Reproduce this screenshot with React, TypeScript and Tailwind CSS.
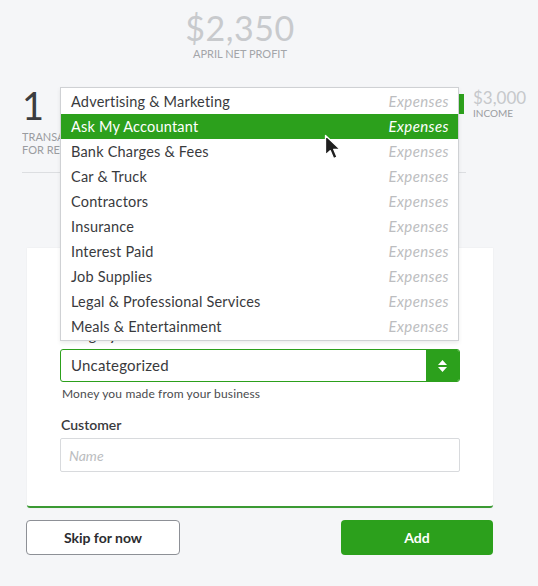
import React from 'react';

const FONT = { fontFamily: 'Lato, "Open Sans", sans-serif' };

const accounts = [
  'Advertising & Marketing',
  'Ask My Accountant',
  'Bank Charges & Fees',
  'Car & Truck',
  'Contractors',
  'Insurance',
  'Interest Paid',
  'Job Supplies',
  'Legal & Professional Services',
  'Meals & Entertainment',
];

function Cursor() {
  return (
    <svg width="20" height="27" viewBox="0 0 20 27" className="absolute left-[324px] top-[134px]">
      <path
        d="M1.5 1.5 L1.5 21 L6.2 16.6 L9.6 24.6 L13 23.1 L9.7 15.3 L16 15.3 Z"
        fill="#1f1f1f"
        stroke="#ffffff"
        strokeWidth="1.3"
        strokeLinejoin="round"
      />
    </svg>
  );
}

function AccountMenu() {
  return (
    <div className="absolute left-[60px] top-[87px] w-[399px] bg-white border border-[#cfd1d4] py-[1px] shadow-[0_2px_4px_rgba(0,0,0,0.08)]">
      {accounts.map((name, i) => {
        const active = i === 1;
        return (
          <div
            key={name}
            className={
              active
                ? 'h-[25px] flex items-center justify-between pl-[10px] pr-[9px] bg-[#2ca01c] text-white'
                : 'h-[25px] flex items-center justify-between pl-[10px] pr-[9px] text-[#393a3d]'
            }
          >
            <span className="text-[14.5px] tracking-[0.2px]">{name}</span>
            <span className={active ? 'text-[15px] italic text-white tracking-[0.4px]' : 'text-[15px] italic text-[#bcbdc0] tracking-[0.4px]'}>
              Expenses
            </span>
          </div>
        );
      })}
    </div>
  );
}

export default function App() {
  return (
    <div className="relative w-[538px] h-[586px] overflow-hidden bg-[#f5f6f8]" style={FONT}>
      {/* net profit */}
      <div className="w-[480px] pt-[11px] text-center">
        <div className="text-[34px] leading-[34px] text-[#c8cacd] tracking-[0.5px]">$2,350</div>
        <div className="mt-[2px] text-[11px] leading-[13px] text-[#a3a5a9]">APRIL NET PROFIT</div>
      </div>

      {/* stats row */}
      <div className="mt-[26px] flex pl-[22px]">
        <div className="w-[437px]">
          <div className="text-[38px] leading-[38px] text-[#3c3d40]">1</div>
          <div className="mt-[6px] w-[38px] overflow-hidden whitespace-nowrap text-[11px] leading-[13px] text-[#9a9ca0]">
            <div>TRANSACTION</div>
            <div>FOR REVIEW</div>
          </div>
        </div>
        <div className="flex items-start gap-[9px]">
          <div className="mt-[8px] w-[5px] h-[20px] bg-[#2ca01c]" />
          <div>
            <div className="mt-[3px] text-[17px] leading-[18px] text-[#c6c8cb]">$3,000</div>
            <div className="text-[10px] leading-[12px] text-[#9a9ca0]">INCOME</div>
          </div>
        </div>
      </div>

      <div className="mt-[16px] ml-[22px] w-[444px] border-t border-[#dcdee1]" />

      {/* form card */}
      <div className="mt-[75px] ml-[27px] w-[466px] bg-white rounded-b-[3px] border-b-2 border-[#3b9a33] shadow-[0_0_2px_rgba(0,0,0,0.07)] px-[33px] pt-[79px] pb-[34px]">
        <div className="text-[14px] leading-[18px] font-semibold text-[#393a3d]">Category</div>
        <div className="mt-[4px] flex h-[33px] rounded-[3px] border border-[#2ca01c] overflow-hidden">
          <div className="flex-1 flex items-center pl-[10px] text-[15px] text-[#393a3d] tracking-[0.2px]">Uncategorized</div>
          <div className="w-[33px] bg-[#2ca01c] flex flex-col items-center justify-center gap-[2px]">
            <svg width="9" height="5" viewBox="0 0 9 5"><path d="M0 5 L4.5 0 L9 5 Z" fill="#fff" /></svg>
            <svg width="9" height="5" viewBox="0 0 9 5"><path d="M0 0 L4.5 5 L9 0 Z" fill="#fff" /></svg>
          </div>
        </div>
        <div className="mt-[4px] pl-[2px] text-[12px] leading-[16px] text-[#4a4b4e] tracking-[0.15px]">
          Money you made from your business
        </div>
        <div className="mt-[14px] pl-[1px] text-[14px] leading-[18px] font-semibold text-[#393a3d]">Customer</div>
        <div className="mt-[4px] h-[34px] rounded-[2px] border border-[#d8dadd] flex items-center pl-[8px] text-[14px] italic text-[#bbbdc0]">
          Name
        </div>
      </div>

      {/* actions */}
      <div className="mt-[12px] flex justify-between pl-[26px] pr-[45px]">
        <button className="w-[154px] h-[35px] rounded-[4px] border-[1.5px] border-[#8d9096] bg-white text-[14px] font-bold text-[#2b2c2f]">
          Skip for now
        </button>
        <button className="w-[152px] h-[35px] rounded-[4px] bg-[#2ca01c] text-[14px] font-bold text-white">
          Add
        </button>
      </div>

      <AccountMenu />
      <Cursor />
    </div>
  );
}
